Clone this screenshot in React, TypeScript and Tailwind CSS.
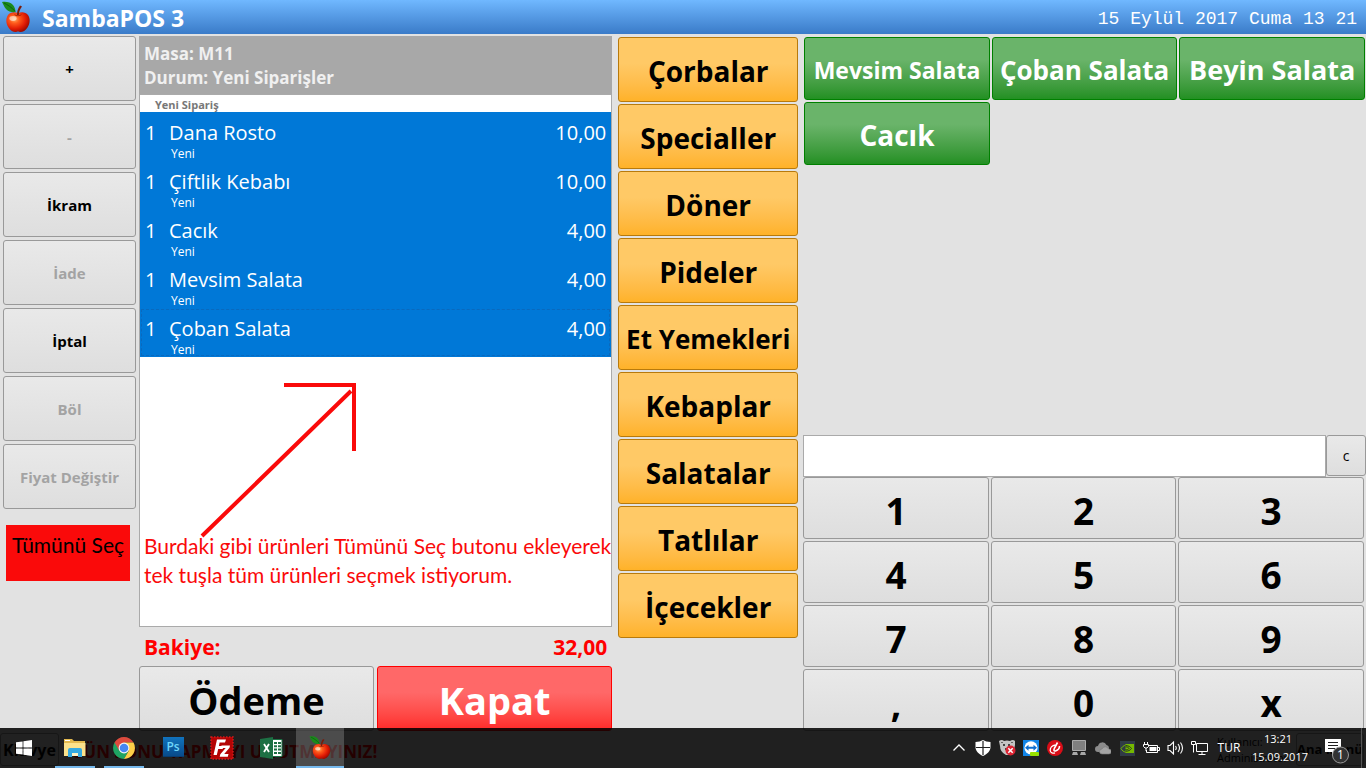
import { useState } from 'react';
import type { ReactNode } from 'react';
import clsx from 'clsx';

interface Order {
  quantity: number;
  name: string;
  price: string;
  status: string;
}

interface Product {
  name: string;
  size: string;
}

interface Command {
  label: string;
  disabled?: boolean;
}

const commands: Command[] = [
  { label: '+' },
  { label: '-', disabled: true },
  { label: 'İkram' },
  { label: 'İade', disabled: true },
  { label: 'İptal' },
  { label: 'Böl', disabled: true },
  { label: 'Fiyat Değiştir', disabled: true },
];

const orders: Order[] = [
  { quantity: 1, name: 'Dana Rosto', price: '10,00', status: 'Yeni' },
  { quantity: 1, name: 'Çiftlik Kebabı', price: '10,00', status: 'Yeni' },
  { quantity: 1, name: 'Cacık', price: '4,00', status: 'Yeni' },
  { quantity: 1, name: 'Mevsim Salata', price: '4,00', status: 'Yeni' },
  { quantity: 1, name: 'Çoban Salata', price: '4,00', status: 'Yeni' },
];

const categories = [
  'Çorbalar',
  'Specialler',
  'Döner',
  'Pideler',
  'Et Yemekleri',
  'Kebaplar',
  'Salatalar',
  'Tatlılar',
  'İçecekler',
];

const products: Product[] = [
  { name: 'Mevsim Salata', size: 'text-[23px]' },
  { name: 'Çoban Salata', size: 'text-[26px]' },
  { name: 'Beyin Salata', size: 'text-[27px]' },
  { name: 'Cacık', size: 'text-[28px]' },
];

const keys = ['1', '2', '3', '4', '5', '6', '7', '8', '9', ',', '0', 'x'];

const grayButton = 'rounded-[3px] border border-[#999] bg-linear-to-b from-[#e9e9e9] to-[#dedede]';

function AppleIcon({ className }: { className: string }) {
  return (
    <svg viewBox="0 0 32 32" className={className} aria-hidden="true">
      <defs>
        <radialGradient id="appleSkin" cx="0.35" cy="0.35" r="0.7">
          <stop offset="0" stopColor="#ffb066" />
          <stop offset="0.3" stopColor="#ff5a1c" />
          <stop offset="0.7" stopColor="#e01b05" />
          <stop offset="1" stopColor="#9b0a00" />
        </radialGradient>
      </defs>
      <path
        d="M18 12c3-2 7.500-1.500 10 1.500 2.500 3.500 2 9-.5 12.500-2 3-4.500 4.500-7 4.500-1 0-1.500-.5-2.500-.5s-1.500.5-2.500.5c-2.500 0-5-1.500-7-4.500C6 22.500 5.500 17 8 13.500c2.500-3 7-3.500 10-1.500z"
        fill="url(#appleSkin)"
      />
      <path d="M14 12.500c2 1.500 6 1.500 8 0-1 3-7 3-8 0z" fill="#8f1200" opacity=".7" />
      <path d="M17 13.500c0-3.500.8-6.500 3-9.500l2 1c-2 2.500-3 5-3.200 8.500z" fill="#7a1c0a" />
      <path d="M15.500 10.500C13 11 8.500 10.500 6 7.500 4 5 3 2.500 2 .5c4-.5 8.500 0 11 3 1.800 2 2.500 5 2.500 7z" fill="#1b8a1b" />
      <path d="M4 1.500c3 1.500 8 4.500 11 8.200" stroke="#0b5a12" strokeWidth=".9" fill="none" />
      <ellipse cx="13" cy="17" rx="3.600" ry="2.400" fill="#fff" opacity=".55" />
    </svg>
  );
}

function WindowsIcon() {
  return (
    <svg width="16" height="16" viewBox="0 0 16 16" fill="#fff" aria-hidden="true">
      <path d="M0 2.300 6.600 1.400V7.600H0zM7.400 1.300 16 0V7.600H7.400zM0 8.400h6.600v6.200L0 13.700zM7.400 8.400H16V16L7.400 14.700z" />
    </svg>
  );
}

function ExplorerIcon() {
  return (
    <svg width="22" height="20" viewBox="0 0 22 20" aria-hidden="true">
      <path d="M0 1h8l2 2h11v15H0z" fill="#e3b94f" />
      <path d="M1 2h5v1H1z" fill="#fff" />
      <path d="M0 5h21.500v13H0z" fill="#fbe18b" />
      <path d="M4 19v-7q0-2 2-2h10q2 0 2 2v7h-4v-4H8v4z" fill="#35a9e0" />
      <path d="M8 15h6v3H8z" fill="#fff3c4" />
    </svg>
  );
}

function ChromeIcon() {
  return (
    <svg width="22" height="22" viewBox="0 0 22 22" aria-hidden="true">
      <path d="M11 11 1.500 5.500A11 11 0 0 1 20.500 5.500L11 5.500z" fill="#dd4b3e" />
      <path d="M11 11 1.500 5.500A11 11 0 0 0 11 22L15.800 13.700z" fill="#1fa463" />
      <path d="M11 22A11 11 0 0 0 20.500 5.500H11L15.800 13.700z" fill="#fdcf48" />
      <path d="M1.500 5.500 6.300 13.700 11 5.500z" fill="#dd4b3e" />
      <circle cx="11" cy="11" r="5.400" fill="#f5f5f5" />
      <circle cx="11" cy="11" r="4.300" fill="#4587f3" />
    </svg>
  );
}

function PhotoshopIcon() {
  return (
    <span className="mb-0.5 flex h-5 w-[21px] items-center justify-center border-b border-[#0a3d70] bg-linear-to-b from-[#1173bd] to-[#084b8b] text-[12px] leading-4 font-semibold text-[#6fd6fa]">
      Ps
    </span>
  );
}

function FilezillaIcon() {
  return (
    <svg width="24" height="24" viewBox="0 0 24 24" aria-hidden="true">
      <rect x="1" y="1" width="22" height="22" fill="#b40404" stroke="#d11a1a" strokeWidth="1.500" strokeDasharray="1.500 1.500" />
      <path d="M7 3.500h9l-1 3H9.600L8.900 10h4.600l-.8 3H8.200L6.800 19H3.500z" fill="#fff" />
      <path d="M11.500 9.500H20l-.5 2.300-5.300 6.200h4.300l-.7 2.700H9.700l.6-2.500 5.400-6.200h-4.600z" fill="#fff" />
    </svg>
  );
}

function ExcelIcon() {
  return (
    <svg width="23" height="22" viewBox="0 0 23 22" aria-hidden="true">
      <path d="M12 2.500h10v17H12z" fill="#fff" stroke="#1d7044" />
      <path d="M14 5h3v2h-3zM18 5h3v2h-3zM14 8.300h3v2h-3zM18 8.300h3v2h-3zM14 11.600h3v2h-3zM18 11.600h3v2h-3zM14 15h3v2h-3zM18 15h3v2h-3z" fill="#1d7044" />
      <path d="M0 2 13 0v22L0 20z" fill="#1d7044" />
      <path d="m4 7 5 8M9 7l-5 8" stroke="#fff" strokeWidth="1.800" />
    </svg>
  );
}

function ChevronUpIcon() {
  return (
    <svg width="14" height="10" viewBox="0 0 14 10" fill="none" stroke="#fff" strokeWidth="1.300" aria-hidden="true">
      <path d="M1.500 7.500 7 2l5.500 5.500" />
    </svg>
  );
}

function ShieldIcon() {
  return (
    <svg width="16" height="16" viewBox="0 0 16 16" aria-hidden="true">
      <path d="M8 0q3 2 7.500 2v5c0 4-3 7-7.500 9C3.500 14 .5 11 .5 7V2Q5 2 8 0z" fill="#fff" />
      <path d="M8 1v14M1 7.500h14" stroke="#202020" strokeWidth="1.200" />
    </svg>
  );
}

function BearIcon() {
  return (
    <svg width="17" height="16" viewBox="0 0 17 16" aria-hidden="true">
      <path d="M0 1q3-2 5 0 3-1 6 0 3-2 5 0v4q-1 8-6 10H7Q1 12 1 6z" fill="#c4c4c4" />
      <path d="M4 4h2v2H4zM9 4h2v2H9zM6 8h4v2H6z" fill="#444" />
      <path d="M2 2h2v1H2zM12 2h2v1h-2z" fill="#666" />
      <circle cx="11.500" cy="10.500" r="5" fill="#dd2433" />
      <path d="m9.300 8.300 4.400 4.400m0-4.400-4.400 4.400" stroke="#fff" strokeWidth="1.500" />
    </svg>
  );
}

function TeamViewerIcon() {
  return (
    <svg width="16" height="16" viewBox="0 0 16 16" aria-hidden="true">
      <path d="M0 0h16v16H0z" fill="#1285e8" />
      <circle cx="8" cy="7.800" r="6.600" fill="#fff" />
      <path d="m2 7.800 3.500-3v2h5v-2l3.500 3-3.500 3v-2h-5v2z" fill="#0e6fd0" />
      <rect x="7" y="12" width="9" height="4" rx="1" fill="#97e100" />
    </svg>
  );
}

function SwirlIcon() {
  return (
    <svg width="16" height="16" viewBox="0 0 16 16" aria-hidden="true">
      <circle cx="8" cy="8" r="8" fill="#d90d17" />
      <path d="M10.500 2.500 7.500 8q-1.500 3.500 1 3c2.500-.8 4-3 4-5" fill="none" stroke="#fff" strokeWidth="1.600" />
      <path d="M8.500 5C5 5.500 3 8 3.200 10.500 3.500 13 6 13.500 8 12.800" fill="none" stroke="#fff" strokeWidth="1.300" />
    </svg>
  );
}

function MonitorIcon() {
  return (
    <svg width="16" height="16" viewBox="0 0 16 16" aria-hidden="true">
      <path d="M1.500.5h13v10h-13z" fill="#7f7f7f" stroke="#aaa" />
      <path d="m2 12h4l1 3H1zm8 0h4l1 3H9z" fill="#a8a8a8" />
    </svg>
  );
}

function CloudIcon() {
  return (
    <svg width="16" height="14" viewBox="0 0 16 14" aria-hidden="true">
      <path d="M3 11a3 3 0 0 1 0-6 4.500 4.500 0 0 1 8.500-1A3 3 0 0 1 14 7v4z" fill="#8b8b8b" />
      <path d="M7 13a2.500 2.500 0 0 1 0-5 3.500 3.500 0 0 1 6.500 0A2.500 2.500 0 0 1 14 13z" fill="#a5a5a5" stroke="#777" strokeWidth=".6" />
    </svg>
  );
}

function NvidiaIcon() {
  return (
    <svg width="15" height="15" viewBox="0 0 15 15" aria-hidden="true">
      <path d="M0 0h15v15H0z" fill="#303b46" />
      <path d="M5.500 3H14v9H5.500z" fill="#76b900" />
      <path d="M1 7.500c2-3 5-4 7-3.500s3.500 2 4 3.500c-1.500 2-3.500 3.500-6 3.500S2 9.500 1 7.500z" fill="none" stroke="#76b900" />
      <path d="M5.500 4.500c3 0 5 1.500 6 3-1.500 2-3.500 2.700-6 2.700M5.500 6c2-.3 3 .5 3.500 1.500-.7 1-2 1.500-3.500 1" fill="none" stroke="#26361c" />
    </svg>
  );
}

function BatteryIcon() {
  return (
    <svg width="17" height="14" viewBox="0 0 17 14" fill="none" stroke="#fff" aria-hidden="true">
      <path d="M5.500 4.500h9v7h-11V9" />
      <path d="M6.500 6h7v4h-7z" fill="#fff" stroke="none" />
      <path d="M15 6.500h1.500v3H15" />
      <path d="M1.500 1v2M4.500 1v2M.5 3.500h5v2L4 7H2L.5 5.500zM3 7v3" />
    </svg>
  );
}

function SpeakerIcon() {
  return (
    <svg width="17" height="16" viewBox="0 0 17 16" fill="none" stroke="#fff" strokeWidth="1.100" aria-hidden="true">
      <path d="M1 5.500h2L6.500 2v12L3 10.500H1z" />
      <path d="M8.500 6q1.500 2 0 4M11 4q3 4 0 8M13.500 2.500q4 5.500 0 11" />
    </svg>
  );
}

function NetworkIcon() {
  return (
    <svg width="17" height="16" viewBox="0 0 17 16" fill="none" stroke="#fff" aria-hidden="true">
      <path d="M5.500 3.500h11v8h-11zM11 11.500v3M7.500 14.500h7" />
      <path d="M.5 1.500h4v3h-4zM2.500 4.500v8" />
    </svg>
  );
}

function NotificationIcon() {
  return (
    <svg width="26" height="26" viewBox="0 0 26 26" aria-hidden="true">
      <path d="M1 1h16v13h-5l-4 4v-4H1z" fill="#fff" />
      <path d="M4 4.500h10M4 7.500h10M4 10.500h7" stroke="#202020" />
      <circle cx="16.500" cy="17" r="8" fill="#333" stroke="#999" />
      <text x="16.500" y="21" textAnchor="middle" fontSize="12" fill="#fff" fontFamily="Open Sans, sans-serif">
        1
      </text>
    </svg>
  );
}

function CommandColumn() {
  return (
    <div className="flex flex-col gap-[3px] pt-0.5">
      {commands.map((command) => (
        <button
          key={command.label}
          disabled={command.disabled}
          className={clsx(grayButton, 'h-[65px] pt-0.5 text-[15px] font-bold text-black disabled:text-[#a3a3a3]')}
        >
          {command.label}
        </button>
      ))}
      <button className="mt-[13px] mr-[6px] ml-[3px] h-14 bg-[#fa0a0a] pb-4 font-['Lato',sans-serif] text-[21px] whitespace-nowrap text-black">
        Tümünü Seç
      </button>
    </div>
  );
}

function OrderRow({ order, focused }: { order: Order; focused: boolean }) {
  return (
    <li className="bg-[#0078d7] p-px">
      <div
        className={clsx(
          'flex h-[47px] border border-dashed pt-[5px] pr-[3px] pl-[3px] text-[20px] leading-7 text-white',
          focused ? 'border-[#0a69bd]' : 'border-transparent',
        )}
      >
        <span className="w-6">{order.quantity}</span>
        <div className="flex-1">
          <p>{order.name}</p>
          <p className="pl-0.5 text-[12px] leading-[14px]">{order.status}</p>
        </div>
        <span>{order.price}</span>
      </div>
    </li>
  );
}

function Ticket() {
  return (
    <section className="flex min-h-0 flex-col pt-0.5">
      <div className="bg-[#a8a8a8] px-[5px] pt-[6px] pb-1 text-[17px] leading-6 font-bold text-[#f0f0f0]">
        <p>Masa: M11</p>
        <p>Durum: Yeni Siparişler</p>
      </div>
      <div className="relative flex min-h-0 flex-1 flex-col border border-[#aaa] bg-white">
        <h2 className="h-[17px] pl-[15px] text-[11px] leading-5 font-bold text-[#777]">Yeni Sipariş</h2>
        <ul>
          {orders.map((order, index) => (
            <OrderRow key={order.name} order={order} focused={index === orders.length - 1} />
          ))}
        </ul>
        <svg viewBox="0 0 160 160" className="absolute top-[284px] left-[60px] h-40 w-40" fill="none" stroke="#fa0a0a" strokeWidth="4" aria-hidden="true">
          <path d="M2 157 151 12M84 6H154V72" />
        </svg>
        <p className="relative mt-auto pb-[37px] pl-1 font-['Lato',sans-serif] text-[21px] leading-[29px] whitespace-nowrap text-[#fa0a0a]">
          Burdaki gibi ürünleri Tümünü Seç butonu ekleyerek
          <br />
          tek tuşla tüm ürünleri seçmek istiyorum.
        </p>
      </div>
      <div className="flex h-[39px] items-center justify-between px-[5px] pt-[3px] text-[21px] font-bold text-[#f00]">
        <span>Bakiye:</span>
        <span>32,00</span>
      </div>
      <div className="grid grid-cols-2 gap-[3px] text-[38px] leading-10 font-bold">
        <button className={clsx(grayButton, 'h-[65px] pt-0.5')}>Ödeme</button>
        <button className="h-[65px] rounded-[3px] border border-[#f00] bg-linear-to-b from-[#ff6868] from-40% to-[#ff2828] pt-0.5 text-white">
          Kapat
        </button>
      </div>
    </section>
  );
}

function Categories() {
  return (
    <nav className="flex flex-col gap-0.5 pt-[3px]">
      {categories.map((category) => (
        <button
          key={category}
          className={clsx(
            'h-[65px] rounded-[3px] border border-[#b87a0c] bg-linear-to-b from-[#ffc966] from-40% to-[#ffb228] pt-[3px] font-bold whitespace-nowrap text-black',
            category.length > 10 ? 'text-[26px]' : 'text-[28px]',
          )}
        >
          {category}
        </button>
      ))}
    </nav>
  );
}

function Keypad() {
  const [value, setValue] = useState('');

  return (
    <div>
      <div className="flex">
        <input
          aria-label="Miktar"
          value={value}
          onChange={(event) => setValue(event.target.value)}
          className="h-[42px] min-w-0 flex-1 border border-[#aaa] bg-white px-2 text-right text-2xl outline-none"
        />
        <button onClick={() => setValue('')} className={clsx(grayButton, 'h-[41px] w-10 text-[14px]')}>
          c
        </button>
      </div>
      <div className="grid grid-cols-3 gap-0.5 pr-0.5">
        {keys.map((key) => (
          <button
            key={key}
            onClick={() => setValue(value + key)}
            className={clsx(grayButton, 'h-[62px] pt-1.5 text-[37px] leading-10 font-bold text-black')}
          >
            {key}
          </button>
        ))}
      </div>
    </div>
  );
}

function Menu() {
  return (
    <section className="flex min-h-0 flex-col justify-between pt-[3px]">
      <div className="grid grid-cols-3 gap-0.5 pr-px pl-px">
        {products.map((product) => (
          <button
            key={product.name}
            className={clsx(
              'h-[63px] rounded-[3px] border border-[#008000] bg-linear-to-b from-[#6ab46a] from-35% to-[#229022] pt-[3px] font-bold whitespace-nowrap text-white',
              product.size,
            )}
          >
            {product.name}
          </button>
        ))}
      </div>
      <Keypad />
    </section>
  );
}

function StatusBar() {
  return (
    <footer className="flex h-[37px] items-center gap-2 pr-0.5 font-bold whitespace-nowrap">
      <button className={clsx(grayButton, 'h-[33px] w-[59px] text-[16px]')}>Klavye</button>
      <p className="flex-1 pt-1 pl-1 text-[17px] text-[#f00]">GÜN SONU YAPMAYI UNUTMAYINIZ!</p>
      <p className="text-[11px] leading-4 font-normal">
        Kullanıcı:
        <br />
        Administrator
      </p>
      <button className={clsx(grayButton, 'h-[33px] w-[68px] text-[13px]')}>Ana Menü</button>
    </footer>
  );
}

function TaskButton({ label, running, active, children }: { label: string; running?: boolean; active?: boolean; children: ReactNode }) {
  return (
    <button
      aria-label={label}
      className={clsx('relative flex h-10 w-12 items-center justify-center', active && 'bg-white/20')}
    >
      {children}
      {(running || active) && (
        <span className={clsx('absolute bottom-0 h-0.5 bg-[#76b9ed]', active ? 'inset-x-0' : 'inset-x-1')} />
      )}
    </button>
  );
}

const trayIcons = [
  { label: 'Gizli simgeler', icon: <ChevronUpIcon /> },
  { label: 'Defender', icon: <ShieldIcon /> },
  { label: 'Veritabanı', icon: <BearIcon /> },
  { label: 'TeamViewer', icon: <TeamViewerIcon /> },
  { label: 'Antivirüs', icon: <SwirlIcon /> },
  { label: 'Ekran', icon: <MonitorIcon /> },
  { label: 'OneDrive', icon: <CloudIcon /> },
  { label: 'NVIDIA', icon: <NvidiaIcon /> },
  { label: 'Pil', icon: <BatteryIcon /> },
  { label: 'Ses', icon: <SpeakerIcon /> },
  { label: 'Ağ', icon: <NetworkIcon /> },
];

function Taskbar() {
  return (
    <div className="absolute inset-x-0 bottom-0 flex h-10 justify-between bg-black/86 text-white">
      <div className="flex gap-px">
        <div className="pr-0.5">
          <TaskButton label="Başlat">
            <WindowsIcon />
          </TaskButton>
        </div>
        <TaskButton label="Dosya Gezgini" running>
          <ExplorerIcon />
        </TaskButton>
        <TaskButton label="Chrome" running>
          <ChromeIcon />
        </TaskButton>
        <TaskButton label="Photoshop">
          <PhotoshopIcon />
        </TaskButton>
        <TaskButton label="FileZilla">
          <FilezillaIcon />
        </TaskButton>
        <TaskButton label="Excel">
          <ExcelIcon />
        </TaskButton>
        <TaskButton label="SambaPOS" active>
          <AppleIcon className="size-6" />
        </TaskButton>
      </div>
      <div className="flex text-[12px]">
        {trayIcons.map((item) => (
          <button key={item.label} aria-label={item.label} className="flex w-6 items-center justify-center">
            {item.icon}
          </button>
        ))}
        <button className="w-9">TUR</button>
        <button className="w-[61px] text-right text-[11px] leading-[18px]">
          <span className="block pr-4">13:21</span>
          <span className="block">15.09.2017</span>
        </button>
        <button aria-label="Bildirimler" className="flex w-[53px] items-center pt-1.5 pl-4">
          <NotificationIcon />
        </button>
        <span className="w-[5px] border-l border-[#555]" />
      </div>
    </div>
  );
}

export default function App() {
  return (
    <div className="relative flex h-screen flex-col overflow-hidden bg-[#e2e2e2] font-['Open_Sans','Noto_Sans',sans-serif] text-black">
      {/* Title bar */}
      <header className="flex h-[34px] shrink-0 items-center bg-linear-to-b from-[#70b8ff] to-[#3a7bc8] pr-[9px] text-white">
        <AppleIcon className="h-[33px] w-8" />
        <h1 className="pt-0.5 pl-[10px] text-[23px] font-bold">SambaPOS 3</h1>
        <time className="ml-auto pt-1 font-['Liberation_Mono',monospace] text-[18px]">15 Eylül 2017 Cuma 13 21</time>
      </header>

      <main className="grid min-h-0 flex-1 grid-cols-[133px_479fr_186fr_565fr] pl-[3px]">
        <CommandColumn />
        <div className="grid min-h-0 px-[3px]">
          <Ticket />
        </div>
        <div className="px-[3px]">
          <Categories />
        </div>
        <div className="grid min-h-0 pl-0.5">
          <Menu />
        </div>
      </main>

      <StatusBar />
      <Taskbar />
    </div>
  );
}
